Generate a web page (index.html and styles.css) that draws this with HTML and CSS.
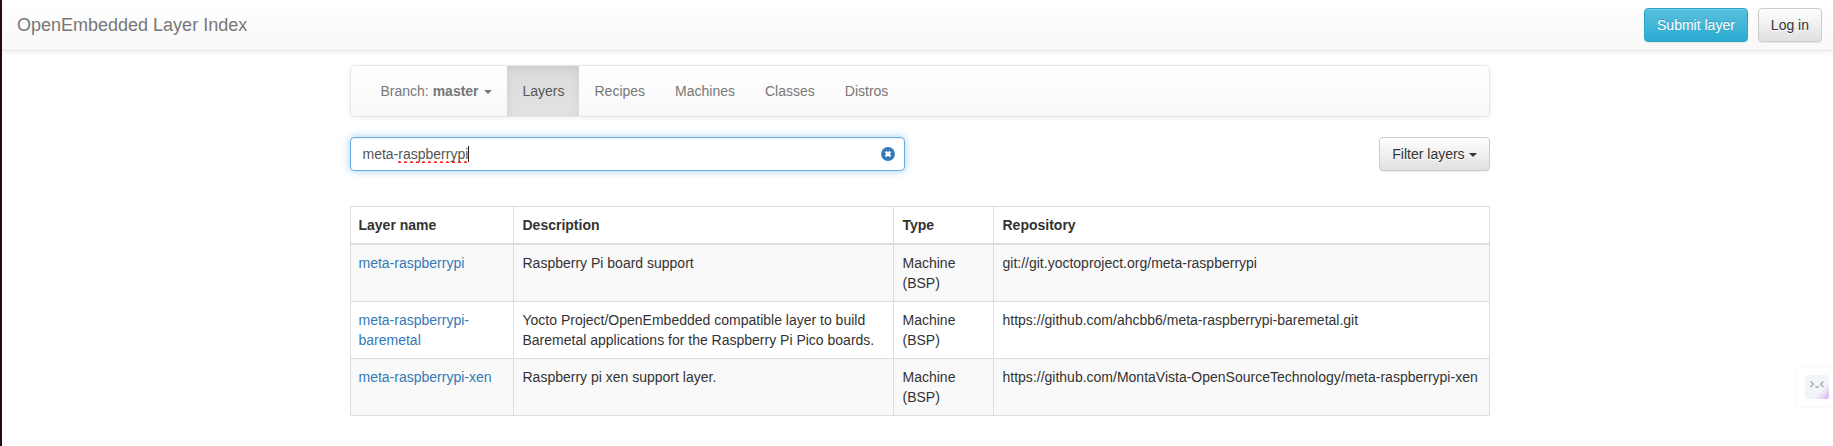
FILE: index.html
```html
<!DOCTYPE html>
<html lang="en">
<head>
<meta charset="utf-8">
<title>OpenEmbedded Layer Index - layers</title>
<link rel="stylesheet" href="styles.css">
</head>
<body>
<header class="topbar">
  <a class="brand">OpenEmbedded Layer Index</a>
  <div class="actions">
    <a class="btn btn-info">Submit layer</a>
    <a class="btn">Log in</a>
  </div>
</header>
<main class="container">
  <nav class="tabs">
    <a class="tab">Branch: <b>master</b> <span class="caret"></span></a>
    <a class="tab active">Layers</a>
    <a class="tab">Recipes</a>
    <a class="tab">Machines</a>
    <a class="tab">Classes</a>
    <a class="tab">Distros</a>
  </nav>
  <div class="filters">
    <div class="search">
      <span class="query">meta-<span class="misspelt">raspberrypi</span></span><span class="cursor"></span>
      <svg class="clear" width="14" height="14" viewBox="0 0 14 14"><circle cx="7" cy="7" r="6.9" fill="#337ab7"/><path d="M4.6 4.6 9.4 9.4M9.4 4.6 4.6 9.4" stroke="#fff" stroke-width="2.5"/></svg>
    </div>
    <a class="btn">Filter layers <span class="caret caret-tight"></span></a>
  </div>
  <table class="layers">
    <colgroup><col class="c-name"><col class="c-desc"><col class="c-type"><col class="c-repo"></colgroup>
    <thead><tr><th>Layer name</th><th>Description</th><th>Type</th><th>Repository</th></tr></thead>
    <tbody>
      <tr><td><a>meta-raspberrypi</a></td><td>Raspberry Pi board support</td><td>Machine (BSP)</td><td>git://git.yoctoproject.org/meta-raspberrypi</td></tr>
      <tr><td><a>meta-raspberrypi-baremetal</a></td><td>Yocto Project/OpenEmbedded compatible layer to build Baremetal applications for the Raspberry Pi Pico boards.</td><td>Machine (BSP)</td><td>https://github.com/ahcbb6/meta-raspberrypi-baremetal.git</td></tr>
      <tr><td><a>meta-raspberrypi-xen</a></td><td>Raspberry pi xen support layer.</td><td>Machine (BSP)</td><td>https://github.com/MontaVista-OpenSourceTechnology/meta-raspberrypi-xen</td></tr>
    </tbody>
  </table>
</main>
<aside class="widget">
  <svg class="face" width="24" height="24" viewBox="0 0 24 24" fill="none" stroke="#a3a6ad" stroke-width="1.3"><path d="M5.5 6.5 8.5 9.3 5.5 12M18.5 6.5 15.5 9.3 18.5 12M10.5 11.3q1.5 2 3 0"/></svg>
</aside>
</body>
</html>
```
FILE: styles.css
```css
* { box-sizing: border-box; }
body {
  margin: 0;
  min-height: 446px;
  border-left: 2px solid #200a1c;
  background: #fff;
  color: #333;
  font: 14px/20px "Liberation Sans", Arial, sans-serif;
  overflow: hidden;
}
.topbar {
  display: flex;
  align-items: center;
  justify-content: space-between;
  height: 51px;
  padding: 0 11px 0 15px;
  border-bottom: 1px solid #e7e7e7;
  background: linear-gradient(#fff, #f8f8f8);
  box-shadow: 0 1px 5px rgba(0, 0, 0, .075);
}
.brand { color: #777; font-size: 18px; text-shadow: 0 1px 0 rgba(255, 255, 255, .25); }
.actions { display: flex; gap: 10px; }
.btn {
  height: 34px;
  padding: 6px 12px;
  border: 1px solid #ccc;
  border-radius: 4px;
  background: linear-gradient(#fff, #e0e0e0);
  box-shadow: inset 0 1px 0 rgba(255, 255, 255, .15), 0 1px 1px rgba(0, 0, 0, .075);
  text-shadow: 0 1px 0 #fff;
  white-space: nowrap;
}
.btn-info {
  border-color: #28a4c9;
  background: linear-gradient(#5bc0de, #2aabd2);
  color: #fff;
  text-shadow: 0 -1px 0 rgba(0, 0, 0, .2);
}
.container { width: 1140px; margin: 14px 0 0 347.5px; }
.tabs {
  display: flex;
  height: 52px;
  padding-left: 15px;
  border: 1px solid #e7e7e7;
  border-radius: 4px;
  background: linear-gradient(#fff, #f8f8f8);
  box-shadow: inset 0 1px 0 rgba(255, 255, 255, .15), 0 1px 5px rgba(0, 0, 0, .075);
}
.tab { padding: 15px; color: #777; text-shadow: 0 1px 0 rgba(255, 255, 255, .25); }
.tab.active {
  background: linear-gradient(#dbdbdb, #e2e2e2);
  box-shadow: inset 0 3px 9px rgba(0, 0, 0, .075);
  color: #555;
}
.caret {
  display: inline-block;
  margin-left: 2px;
  vertical-align: middle;
  border-top: 4px solid;
  border-right: 4px solid transparent;
  border-left: 4px solid transparent;
}
.caret-tight { margin-left: 0; }
.filters { display: flex; justify-content: space-between; margin: 20px 0 35px; }
.search {
  display: flex;
  align-items: center;
  width: 555px;
  height: 34px;
  padding: 0 9px 0 12px;
  border: 1px solid #66afe9;
  border-radius: 4px;
  box-shadow: inset 0 1px 1px rgba(0, 0, 0, .075), 0 0 8px rgba(102, 175, 233, .6);
  color: #555;
}
.misspelt {
  padding-bottom: 1px;
  background:
    repeating-linear-gradient(90deg, #f22 0 3px, transparent 3px 6px) 0 100% / 100% 1px no-repeat,
    repeating-linear-gradient(90deg, #f99 0 1px, #f33 1px 2px, #f99 2px 3px, transparent 3px 6px) 0 calc(100% - 1px) / 100% 1px no-repeat;
}
.cursor { width: 1px; height: 16px; background: #222; }
.clear { margin-left: auto; }
.layers { width: 1140px; margin-left: .5px; table-layout: fixed; border-collapse: collapse; }
.c-name { width: 163px; }
.c-desc { width: 380px; }
.c-type { width: 100px; }
.layers th, .layers td { padding: 8px 7.5px 8px 8.5px; border: 1px solid #ddd; text-align: left; vertical-align: top; }
.layers th:first-child, .layers td:first-child { padding-left: 7.5px; }
.layers th { border-bottom-width: 2px; }
.layers tbody tr:nth-child(odd) { background: #f9f9f9; }
.layers a { color: #337ab7; }
.widget {
  position: absolute;
  top: 367px;
  right: 0;
  width: 36px;
  height: 40px;
  padding: 8px;
  border-radius: 4px 0 0 4px;
  background: #fff;
  box-shadow: 0 0 4px rgba(0, 0, 0, .06);
}
.face {
  display: block;
  border-radius: 3px;
  background: linear-gradient(135deg, #f1f4f8 65%, #eadcf8 80%, #c9a9ee);
}
```
